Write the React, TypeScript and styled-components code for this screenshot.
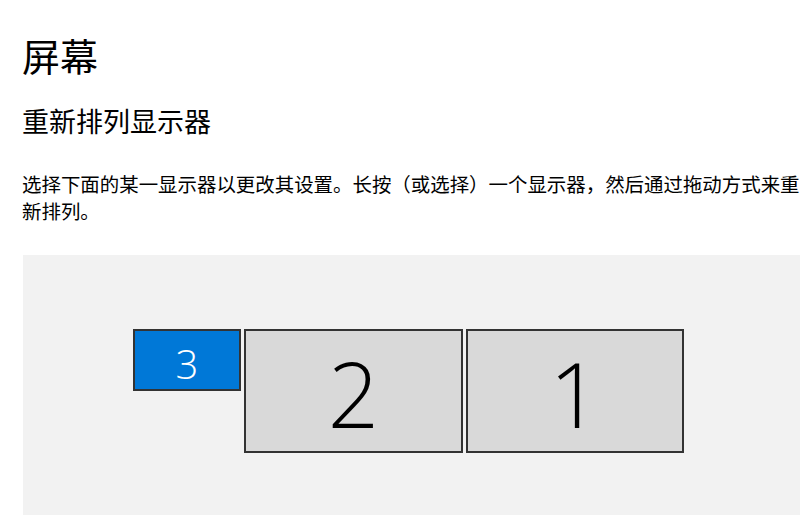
import styled, { createGlobalStyle } from "styled-components";

const GlobalStyle = createGlobalStyle`
  html, body {
    margin: 0;
    padding: 0;
    background: #ffffff;
    overflow: hidden;
  }
  body {
    font-family: "Noto Sans CJK SC", "Noto Sans", sans-serif;
    color: #000000;
  }
`;

interface IMonitor {
  id: number;
  w: number;
  h: number;
  active?: boolean;
}

const monitors: IMonitor[] = [
  { id: 3, w: 108, h: 62, active: true },
  { id: 2, w: 219, h: 124 },
  { id: 1, w: 218, h: 124 },
];

function App() {
  return (
    <Page>
      <GlobalStyle />
      <Title>屏幕</Title>
      <SubTitle>重新排列显示器</SubTitle>
      <Desc>
        选择下面的某一显示器以更改其设置。长按（或选择）一个显示器，然后通过拖动方式来重新排列。
      </Desc>
      <Canvas>
        {monitors.map(m => (
          <Monitor key={m.id} $w={m.w} $h={m.h} $active={m.active}>
            <MonitorNum $small={m.active}>{m.id}</MonitorNum>
          </Monitor>
        ))}
      </Canvas>
    </Page>
  );
}

const Page = styled.div`
  width: 800px;
  height: 515px;
  overflow: hidden;
  padding-left: 22px;
  box-sizing: border-box;
`;

const Title = styled.h1`
  margin: 36px 0 0 0;
  font-size: 38px;
  line-height: 38px;
  font-weight: 400;
`;

const SubTitle = styled.h2`
  margin: 33px 0 0 0;
  font-size: 27px;
  line-height: 27px;
  font-weight: 400;
`;

const Desc = styled.p`
  margin: 36px 0 0 0;
  width: 40em;
  font-size: 19.45px;
  line-height: 27px;
  font-weight: 400;
`;

const Canvas = styled.div`
  margin: 31px 0 0 1px;
  width: 800px;
  height: 270px;
  background: #f2f2f2;
  box-sizing: border-box;
  padding: 74px 0 0 110px;
  display: flex;
  align-items: flex-start;
  gap: 3px;
`;

const Monitor = styled.div<{ $w: number; $h: number; $active?: boolean }>`
  width: ${p => p.$w}px;
  height: ${p => p.$h}px;
  box-sizing: border-box;
  border: 2px solid #333333;
  background: ${p => (p.$active ? "#0078d7" : "#d9d9d9")};
  color: ${p => (p.$active ? "#ffffff" : "#000000")};
  display: flex;
  align-items: center;
  justify-content: center;
  flex-shrink: 0;
`;

const MonitorNum = styled.span<{ $small?: boolean }>`
  font-family: "Open Sans", "Noto Sans", sans-serif;
  font-weight: 300;
  font-size: ${p => (p.$small ? "40px" : "90px")};
  line-height: 1;
  margin-top: ${p => (p.$small ? "8px" : "4px")};
`;

export default App;
